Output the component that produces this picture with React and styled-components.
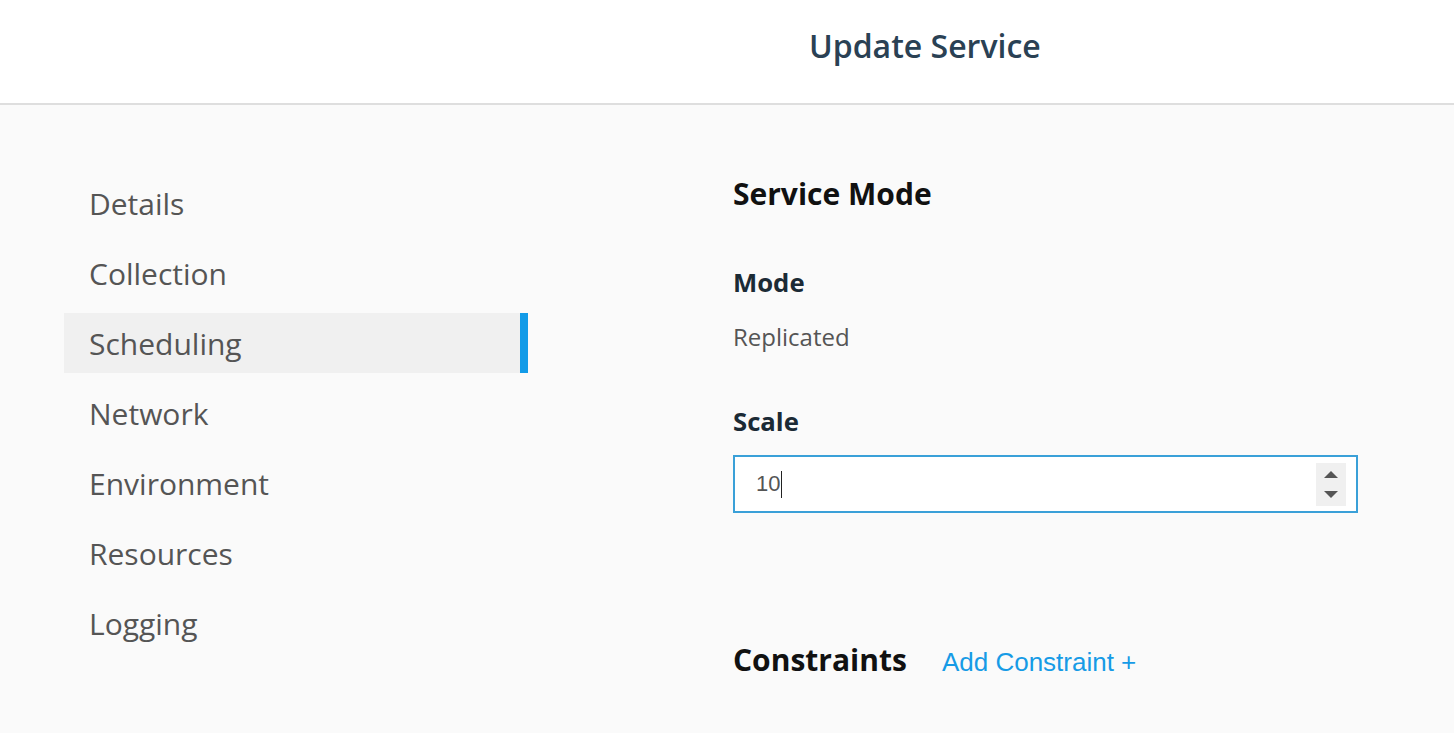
import React from "react";
import styled, { createGlobalStyle } from "styled-components";

const GlobalStyle = createGlobalStyle`
  html, body {
    margin: 0;
    padding: 0;
    background: #fafafa;
    font-family: "Open Sans", "Noto Sans", sans-serif;
  }
`;

const Page = styled.div`
  width: 1454px;
  min-height: 733px;
  background: #fafafa;
`;

const Header = styled.header`
  height: 105px;
  background: #fff;
  border-bottom: 2px solid #dedede;
  display: flex;
  align-items: center;
  padding: 0 0 12px 809px;
  box-sizing: border-box;
`;

const Title = styled.h1`
  margin: 0;
  font-size: 32px;
  font-weight: 600;
  color: #2a4154;
`;

const Body = styled.div`
  display: flex;
  gap: 205px;
  padding: 68px 0 0 64px;
`;

const Nav = styled.nav`
  width: 464px;
  display: flex;
  flex-direction: column;
  gap: 10px;
`;

const NavItem = styled.div`
  height: 60px;
  display: flex;
  align-items: center;
  padding-left: 25px;
  font-size: 30px;
  color: #555;
  background: ${({ active }) => (active ? "#f0f0f0" : "transparent")};
  border-right: 8px solid ${({ active }) => (active ? "#129be8" : "transparent")};
`;

const Main = styled.main`
  width: 625px;
  padding-top: 1px;
`;

const SectionTitle = styled.h2`
  margin: 0;
  font-size: 30px;
  font-weight: 700;
  color: #111;
  line-height: 40px;
`;

const Label = styled.div`
  margin-top: ${({ top }) => top}px;
  font-size: 25.7px;
  font-weight: 700;
  color: #1b2a35;
  line-height: 34px;
`;

const Value = styled.div`
  margin-top: 22px;
  font-size: 24px;
  color: #555;
  line-height: 30px;
`;

const Field = styled.div`
  margin-top: 16px;
  height: 58px;
  border: 2px solid #3aa0d8;
  background: #fff;
  box-sizing: border-box;
  display: flex;
  align-items: center;
  padding: 0 10px 0 21px;
`;

const FieldText = styled.span`
  flex: 1;
  font-family: "Liberation Sans", Arial, sans-serif;
  font-size: 22px;
  color: #555;
  display: flex;
  align-items: center;
`;

const Caret = styled.span`
  display: inline-block;
  width: 1px;
  height: 27px;
  background: #222;
  margin-left: 1px;
`;

const Spinner = styled.div`
  width: 30px;
  height: 43px;
  background: #f0f0f0;
  display: flex;
  flex-direction: column;
  align-items: center;
  justify-content: center;
  gap: 13px;
`;

const Arrow = styled.span`
  width: 0;
  height: 0;
  border-left: 7px solid transparent;
  border-right: 7px solid transparent;
  ${({ up }) =>
    up ? "border-bottom: 7px solid #555;" : "border-top: 7px solid #555;"}
`;

const ConstraintRow = styled.div`
  margin-top: 127px;
  display: flex;
  align-items: baseline;
  gap: 35px;
`;

const AddLink = styled.a`
  font-family: "Liberation Sans", Arial, sans-serif;
  font-size: 26px;
  color: #169be6;
  cursor: pointer;
`;

const navItems = [
  "Details",
  "Collection",
  "Scheduling",
  "Network",
  "Environment",
  "Resources",
  "Logging",
];

export default function App() {
  return (
    <Page>
      <GlobalStyle />
      <Header>
        <Title>Update Service</Title>
      </Header>
      <Body>
        <Nav>
          {navItems.map((item) => (
            <NavItem key={item} active={item === "Scheduling"}>
              {item}
            </NavItem>
          ))}
        </Nav>
        <Main>
          <SectionTitle>Service Mode</SectionTitle>
          <Label top={52}>Mode</Label>
          <Value>Replicated</Value>
          <Label top={53}>Scale</Label>
          <Field>
            <FieldText>
              10
              <Caret />
            </FieldText>
            <Spinner>
              <Arrow up />
              <Arrow />
            </Spinner>
          </Field>
          <ConstraintRow>
            <SectionTitle>Constraints</SectionTitle>
            <AddLink>Add Constraint +</AddLink>
          </ConstraintRow>
        </Main>
      </Body>
    </Page>
  );
}
